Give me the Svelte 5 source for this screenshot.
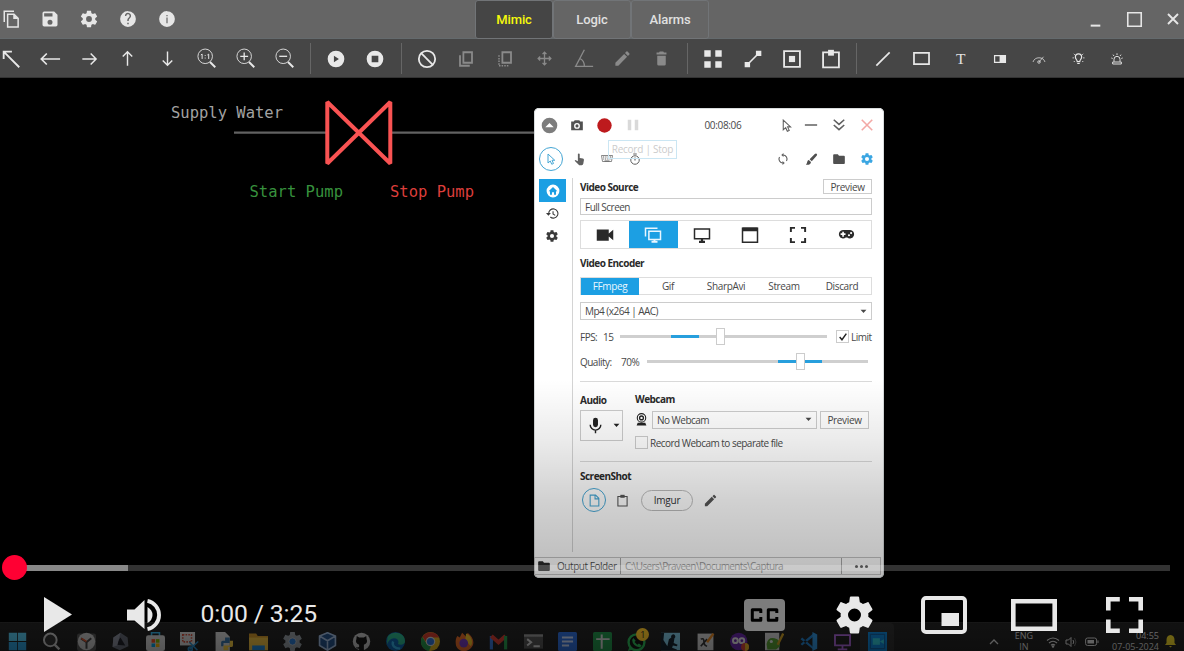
<script>
  const icons = {
    copy: '<path d="M3 16V1.500h13M7.500 5.500h8.500l5.500 5.500v11.500H7.500z" fill="none" stroke="currentColor" stroke-width="2"/><path d="M15 5v7h7z"/>',
    save: '<path d="M17 3H5a2 2 0 0 0-2 2v14a2 2 0 0 0 2 2h14a2 2 0 0 0 2-2V7zM12 19a3 3 0 1 1 0-6 3 3 0 0 1 0 6zM15 9H5V5h10z" fill-rule="evenodd"/>',
    gear: '<path d="M19.430 12.980c.04-.32.07-.64.07-.98s-.03-.66-.07-.98l2.110-1.650c.19-.15.24-.42.12-.64l-2-3.460c-.12-.22-.39-.3-.61-.22l-2.490 1c-.52-.4-1.080-.73-1.690-.98l-.38-2.650C14.460 2.180 14.250 2 14 2h-4c-.25 0-.46.18-.49.42l-.38 2.650c-.61.25-1.170.59-1.690.98l-2.490-1c-.23-.09-.49 0-.61.22l-2 3.460c-.13.22-.07.49.12.64l2.110 1.650c-.04.32-.07.65-.07.98s.03.66.07.98l-2.110 1.650c-.19.15-.24.42-.12.64l2 3.460c.12.22.39.3.61.22l2.490-1c.52.4 1.080.73 1.690.98l.38 2.650c.03.24.24.42.49.42h4c.25 0 .46-.18.49-.42l.38-2.650c.61-.25 1.170-.59 1.690-.98l2.490 1c.23.09.49 0 .61-.22l2-3.460c.12-.22.07-.49-.12-.64zM12 15.500a3.500 3.500 0 1 1 0-7 3.500 3.500 0 0 1 0 7z"/>',
    help: '<path fill-rule="evenodd" d="M12 1.500a10.500 10.500 0 1 0 0 21 10.500 10.500 0 0 0 0-21zM11 17h2v2h-2zm4.100-6.600-.9.900C13.400 12 13 12.700 13 14.500h-2c0-2 .4-3 1.400-4l1.200-1.200A2.200 2.200 0 1 0 9.800 8H7.900a4.100 4.100 0 1 1 7.200 2.400z"/>',
    info: '<path fill-rule="evenodd" d="M12 1.500a10.500 10.500 0 1 0 0 21 10.500 10.500 0 0 0 0-21zM11.200 10h1.600v7.500h-1.600zM11.200 6.500h1.600v1.800h-1.600z"/>',
    nw: '<path d="M4 12V4h9M4 4l17 17" fill="none" stroke="currentColor" stroke-width="2"/>',
    left: '<path d="M8.500 6 2.500 12l6 6M3 12h20" fill="none" stroke="currentColor" stroke-width="1.800"/>',
    right: '<path d="M14 5.500l6.500 6.500-6.500 6.500M20 12H4" fill="none" stroke="currentColor" stroke-width="1.800"/>',
    up: '<path d="M6 9.500 12 3.500l6 6M12 4v17" fill="none" stroke="currentColor" stroke-width="1.800"/>',
    down: '<path d="M6 14.500l6 6 6-6M12 20V3" fill="none" stroke="currentColor" stroke-width="1.800"/>',
    zoomFit: '<circle cx="10.500" cy="9.500" r="8.300" fill="none" stroke="currentColor" stroke-width="1"/><path d="M16 16l6 6" stroke="currentColor" stroke-width="2.200"/><path d="M5.500 8 7 7v5.500M13 8l1.500-1v5.500M10.500 8v1M10.500 11v1" fill="none" stroke="currentColor" stroke-width="1.100"/>',
    zoomIn: '<circle cx="10.500" cy="9.500" r="8.300" fill="none" stroke="currentColor" stroke-width="1"/><path d="M16 16l6 6" stroke="currentColor" stroke-width="2.200"/><path d="M6 9.500h9M10.500 5v9" stroke="currentColor" stroke-width="1.500"/>',
    zoomOut: '<circle cx="10.500" cy="9.500" r="8.300" fill="none" stroke="currentColor" stroke-width="1"/><path d="M16 16l6 6" stroke="currentColor" stroke-width="2.200"/><path d="M6 9.500h9" stroke="currentColor" stroke-width="1.500"/>',
    playc: '<path fill-rule="evenodd" d="M12 2a10 10 0 1 0 0 20 10 10 0 0 0 0-20zM9.500 8v8l6-4z"/>',
    stopc: '<path fill-rule="evenodd" d="M12 2a10 10 0 1 0 0 20 10 10 0 0 0 0-20zM8 8h8v8H8z"/>',
    ban: '<circle cx="12" cy="12" r="9.800" fill="none" stroke="currentColor" stroke-width="2.200"/><path d="M5 5l14 14" stroke="currentColor" stroke-width="2.200"/>',
    dup: '<path d="M8.500 3H20v14H8.500zM4 7v14h13" fill="none" stroke="currentColor" stroke-width="2.400"/>',
    dupDash: '<path d="M8.500 3H20v14H8.500z" fill="none" stroke="currentColor" stroke-width="2.400"/><path d="M4 7v14h13" fill="none" stroke="currentColor" stroke-width="2" stroke-dasharray="2 1.500"/>',
    move: '<path d="M12 4v16M4 12h16M9.500 6.500 12 4l2.500 2.500M9.500 17.500 12 20l2.500-2.500M6.500 9.500 4 12l2.500 2.500M17.500 9.500 20 12l-2.500 2.500" fill="none" stroke="currentColor" stroke-width="1.700"/>',
    angle: '<path d="M13 2 3 21h20M8 12c3 1.500 5 5 5 9" fill="none" stroke="currentColor" stroke-width="1.500"/>',
    pencil: '<path d="M3 17.250V21h3.750L17.810 9.940l-3.750-3.750zM20.710 7.040a1 1 0 0 0 0-1.410l-2.340-2.340a1 1 0 0 0-1.410 0l-1.830 1.830 3.750 3.750z"/>',
    trash: '<path d="M6 20a2 2 0 0 0 2 2h8a2 2 0 0 0 2-2V8H6zM19 3.500h-3.500l-1-1.500h-5l-1 1.500H5v3h14z"/>',
    grid: '<path d="M2.500 2.500h7v7h-7zM14.500 2.500h7v7h-7zM2.500 14.500h7v7h-7zM14.500 14.500h7v7h-7z"/>',
    connect: '<path d="M15.500 2H22v6.500h-6.500zM2 15.500h6.500V22H2z"/><path d="M6 18 18 6" stroke="currentColor" stroke-width="2"/>',
    boxed: '<path d="M2.500 2.500h19v19h-19z" fill="none" stroke="currentColor" stroke-width="2.200"/><path d="M8.300 8.300h7.400v7.400H8.300z"/>',
    paste: '<path d="M2.500 4h19v18h-19z" fill="none" stroke="currentColor" stroke-width="2.200"/><path d="M8.500 1h7v7h-7z"/>',
    line: '<path d="M4 20 20 4" stroke="currentColor" stroke-width="2"/>',
    rect: '<path d="M2.500 5h19v14h-19z" fill="none" stroke="currentColor" stroke-width="2.200"/>',
    toggle: '<path d="M5.500 8h13v8h-13z" fill="none" stroke="currentColor" stroke-width="1.500"/><path d="M11.500 7.500h7.500v9h-7.500z"/>',
    gauge: '<path d="M4 16a8.500 8.500 0 0 1 16 0M12 16l6-7" fill="none" stroke="currentColor" stroke-width="1.200" opacity=".8"/><circle cx="12" cy="16" r="1.700" fill="none" stroke="currentColor"/>',
    bulb: '<path d="M10 17c0-3-3-4-3-7.500a5 5 0 0 1 10 0c0 3.500-3 4.500-3 7.500zM10 20h4" fill="none" stroke="currentColor" stroke-width="1.900"/><path d="M2.500 11h2M19.500 11h2M4.500 4.500l1.500 1.500M19.500 4.500 18 6M4.500 17.500 6 16M19.500 17.500 18 16" stroke="currentColor" stroke-width="1.500"/>',
    siren: '<path d="M7.500 16v-3.500a4.500 4.500 0 0 1 9 0V16M5.500 16.500h13v3h-13zM12 3.500v2.500M6 5.500l1.500 2M18 5.500l-1.500 2M3.500 10.500l2 .7M20.500 10.500l-2 .7" fill="none" stroke="currentColor" stroke-width="1.400"/>',
    min: '<path d="M6.500 19h11" stroke="currentColor" stroke-width="2.300"/>',
    max: '<path d="M3.500 3.500h17v17h-17z" fill="none" stroke="currentColor" stroke-width="2"/>',
    close: '<path d="M6 6l12 12M18 6 6 18" stroke="currentColor" stroke-width="2.300"/>',
    upc: '<path fill-rule="evenodd" d="M12 1a11 11 0 1 0 0 22 11 11 0 0 0 0-22zM6 14.500h12l-6-6z"/>',
    camera: '<path fill-rule="evenodd" d="M8 4 6.500 6H2v15h20V6h-4.500L16 4zm4 4.500a5 5 0 1 1 0 10 5 5 0 0 1 0-10zm0 2.300a2.700 2.700 0 1 0 0 5.400 2.700 2.700 0 0 0 0-5.400z"/>',
    record: '<circle cx="12" cy="12" r="11.500"/>',
    pause: '<path d="M3 3h6v18H3zM15 3h6v18h-6z"/>',
    cursor: '<path d="M6 2v18l4.500-4 3 6.500 3.500-1.500-3-6.500h5.500z" fill="none" stroke="currentColor" stroke-width="2"/>',
    dash: '<path d="M1.500 12h21" stroke="currentColor" stroke-width="2.500"/>',
    chevs: '<path d="M3 3l9 8 9-8M3 12l9 8 9-8" fill="none" stroke="currentColor" stroke-width="2.700"/>',
    bigx: '<path d="M3 3l18 18M21 3 3 21" stroke="currentColor" stroke-width="2.700"/>',
    hand: '<path d="M9 2.500a1.700 1.700 0 0 1 3.400 0V9l6 1.300q2 .5 1.800 2.600L19 20q-.4 2.500-3 2.500h-4.500L3 14.500l1.500-1.400L9 15z"/>',
    keys: '<path d="M1 5h22l-2 12H3z" fill="none" stroke="currentColor" stroke-width="1.500"/><path d="M4 8h16M4.500 12h15" stroke="currentColor" stroke-width="2.300" stroke-dasharray="2 1.500"/><path d="M7 16h10" stroke="currentColor" stroke-width="2"/>',
    timer: '<circle cx="12" cy="14" r="8.500" fill="none" stroke="currentColor" stroke-width="2"/><path d="M8.500 2h7M12 9v6" stroke="currentColor" stroke-width="2.300"/>',
    sync: '<path d="M12 4a8 8 0 0 1 7 12M12 20A8 8 0 0 1 5 8" fill="none" stroke="currentColor" stroke-width="2.300"/><path d="M13 0v8L8.500 4zM11 24v-8l4.500 4z"/>',
    brush: '<path d="M21.500 1.500q1.800 1.500 0 3.500L12.500 15l-4-3.500 9.500-9.500q1.800-1.500 3.500-.5zM7 13l4 3.500C11 21 6 23 1.500 21 5 19.500 3 14 7 13z"/>',
    folder: '<path d="M3.500 4H10l2 2.500h8.500A1.500 1.500 0 0 1 22 8v11a1.500 1.500 0 0 1-1.500 1.500h-17A1.500 1.500 0 0 1 2 19V5.500A1.500 1.500 0 0 1 3.500 4z"/>',
    home: '<path fill-rule="evenodd" d="M12 1a11 11 0 1 0 0 22 11 11 0 0 0 0-22zM4.500 12.500 12 5l7.500 7.500h-2.300V18.500h-3.400V14h-3.600v4.500H6.800v-6z"/>',
    history: '<path d="M5 12.500A8.500 8.500 0 1 1 8 18.500M13 8v5l4 2.500" fill="none" stroke="currentColor" stroke-width="2"/><path d="M0 11h9l-4.500 5z"/>',
    video: '<path d="M1 4.500h16v5.500l6-5v14l-6-5v5.500H1z"/>',
    screens: '<path d="M6.500 7H22v11H6.500zM2 14V3h16" fill="none" stroke="currentColor" stroke-width="2"/><path d="M10 21h8M14 18v3" stroke="currentColor" stroke-width="2.500"/>',
    monitor: '<path d="M2 4h20v13H2z" fill="none" stroke="currentColor" stroke-width="2"/><path d="M8 21h8M12 17v4" stroke="currentColor" stroke-width="3"/>',
    windowed: '<path d="M2 3h20v18.500H2z" fill="none" stroke="currentColor" stroke-width="2"/><path d="M2 2h20v5H2z"/>',
    corners: '<path d="M2.500 8V2.500H8M16 2.500h5.500V8M21.500 16v5.500H16M8 21.500H2.500V16" fill="none" stroke="currentColor" stroke-width="2.600"/>',
    pad: '<path fill-rule="evenodd" d="M7 5.500h10a6 6 0 1 1-4 10.700h-2A6 6 0 1 1 7 5.500zM6 8v2.300H3.700v2.400H6V15h2.300v-2.300h2.300v-2.400H8.300V8zm9.500 3.500a1.500 1.500 0 1 0 0 3 1.500 1.500 0 0 0 0-3zm3-3a1.500 1.500 0 1 0 0 3 1.500 1.500 0 0 0 0-3z"/>',
    mic: '<path d="M12 14.500a3.500 3.500 0 0 0 3.500-3.500V4.500a3.500 3.500 0 0 0-7 0V11a3.500 3.500 0 0 0 3.500 3.500z"/><path d="M4.500 11a7.500 7.500 0 0 0 15 0M12 18v5" fill="none" stroke="currentColor" stroke-width="2"/>',
    webcam: '<circle cx="12" cy="9" r="7.800" fill="none" stroke="currentColor" stroke-width="2"/><circle cx="12" cy="9" r="3.500" fill="none" stroke="currentColor" stroke-width="2.500"/><path d="M5 18h14l2 5H3z"/>',
    doc: '<path d="M4 2h10l6 6v14H4zM13 2v7h7" fill="none" stroke="currentColor" stroke-width="2"/>',
    clip: '<path d="M3.500 4.500h17V22h-17z" fill="none" stroke="currentColor" stroke-width="2"/><path d="M8 1.500h8V7H8z"/>',
    tick: '<path d="M4 12l5.500 6.500L20 4" fill="none" stroke="currentColor" stroke-width="3.500"/>',
    caret: '<path d="M2 6h20l-10 11z"/>'
  };

  const fileTools = ['copy', 'save', 'gear', 'help', 'info'];
  const tabs = ['Mimic', 'Logic', 'Alarms'];
  const toolGroups = [
    [['nw', 22], ['left', 22], ['right', 20], ['up', 19], ['down', 19], ['zoomFit', 21], ['zoomIn', 21], ['zoomOut', 21]],
    [['playc', 20], ['stopc', 20]],
    [['ban', 20], ['dup', 18, 1], ['dupDash', 18, 1], ['move', 19, 1], ['angle', 21, 1], ['pencil', 19, 1], ['trash', 17, 1]],
    [['grid', 22], ['connect', 20], ['boxed', 20], ['paste', 20]],
    [['line', 20], ['rect', 19], ['text', 0], ['toggle', 20], ['gauge', 18], ['bulb', 15], ['siren', 16]]
  ];
  const sources = [['video', 18], ['screens', 18], ['monitor', 18], ['windowed', 18], ['corners', 18], ['pad', 17]];
  const encoders = ['FFmpeg', 'Gif', 'SharpAvi', 'Stream', 'Discard'];

  const apps = [
    '<path fill="#57cdf5" d="M1 1h10.500v10.500H1zM12.500 1H23v10.500H12.500z"/><path fill="#2ea6e6" d="M1 12.500h10.500V23H1zM12.500 12.500H23V23H12.500z"/>',
    '<circle cx="10.500" cy="10" r="8" fill="#333" stroke="#ccc" stroke-width="2.500"/><path d="M16 16l6 6" stroke="#ccc" stroke-width="3"/>',
    '<rect x="0" y="2" width="24" height="22" rx="3" fill="#555"/><circle cx="12" cy="12" r="11" fill="#ccc"/><path d="M12 21v-8L5 8M12 13l6-5" fill="none" stroke="#444" stroke-width="2.500"/><path d="M12 12 5.500 8" stroke="#e0542c" stroke-width="2"/>',
    '<path d="M12 1l9 6 1 11-11 5-9-4L3 7z" fill="#666b78"/><path d="M12 7l6 10-12-1z" fill="#1c1e26"/><path d="M12 1 3 7l-1 12 6-2z" fill="#8f94a2"/>',
    '<path d="M7 5V1h10v4" fill="none" stroke="#36b8ee" stroke-width="2"/><rect y="4" width="24" height="20" rx="3" fill="#ddd"/><path fill="#f04d23" d="M7 9h4.500v4.500H7z"/><path fill="#80b900" d="M12.500 9H17v4.500h-4.500z"/><path fill="#00a2e8" d="M7 14.500h4.500V19H7z"/><path fill="#ffb900" d="M12.500 14.500H17V19h-4.500z"/>',
    '<path fill="#ddd" d="M0 0h19v17H0z"/><path d="M3.500 3.500h11v9h-11z" fill="none" stroke="#d14c37" stroke-width="2" stroke-dasharray="2 1.500"/><path d="M12 22 23 12M12 13l10 10" stroke="#278fd0" stroke-width="2"/><circle cx="13" cy="21.500" r="2.500" fill="none" stroke="#278fd0" stroke-width="2"/>',
    '<path fill="#ddd" d="M2 0h12l6 6v18H2z"/><path d="M14 7h6v7h-8v4H9v-5q0-2 2-2h3z" fill="#3978ad"/><path d="M12 23v-6h8v-6h4v6q0 2-2 2h-4v4z" fill="#ffd343"/>',
    '<path fill="#d79a28" d="M0 2h9l2 3h13v18H0z"/><path fill="#f5c543" d="M0 7h24v16H0z"/><path fill="#218be0" d="M4 17h16v6H4z"/>',
    '<g color="#9aa2a9" fill="currentColor" transform="translate(-2.400 -2.400) scale(1.200)">GEAR</g><circle cx="12" cy="12" r="4.500" fill="#287bd5" stroke="#ccc"/>',
    '<path fill="#23538e" d="M12 0l11 5v12l-11 7L1 17V5z"/><path d="M2 5l10 6 10-6M12 11v12M2 5l10-4 10 4v12l-10 6-10-6z" fill="none" stroke="#a9c4e8" stroke-width="2"/>',
    '<circle cx="12" cy="12" r="11" fill="#ccc"/><path d="M6 5l3 2h6l3-2 .5 4q2 5-3.500 7v8H9v-3q-3 1-4-2 2 1 4 0v-3Q3.500 14 5.500 9z" fill="#111"/>',
    '<circle cx="12" cy="12" r="12" fill="#0d65b1"/><path d="M2 6C7-2 24-1 24 12c0 4-6 5-9 3 2-3 0-7-5-7-4 0-7 3-9 8z" fill="#2bbd91"/><path d="M9 12c-2 5 2 9 9 9" fill="none" stroke="#32b5ef" stroke-width="3"/>',
    '<circle cx="12" cy="12" r="12" fill="#e7b91f"/><path d="M2 6a12 12 0 0 1 21 1H12l-4 8z" fill="#da3c2b"/><path d="M1.500 6 8 16l5 1-3 7A12 12 0 0 1 1.500 6z" fill="#249c4c"/><circle cx="12" cy="12" r="6" fill="#ddd"/><circle cx="12" cy="12" r="4.500" fill="#2a75df"/>',
    '<path d="M3 5l3 2 3-6 5 5 2-5c5 4 8 9 7 14-3 12-21 12-22 0-.5-4 0-7 2-10z" fill="#f36f27"/><path d="M14 2c8 4 9 12 6 16l-7-8z" fill="#fccb29"/><circle cx="11" cy="14" r="5.500" fill="#793bc6"/>',
    '<path d="M3 22V5" stroke="#397be3" stroke-width="4"/><path d="M3 5l9 8 9-8" fill="none" stroke="#de3d31" stroke-width="5"/><path d="M21 5v17" stroke="#28a451" stroke-width="4"/>',
    '<path fill="#555" d="M0 3h24v18H0z"/><path fill="#999" d="M0 3h24v3H0z"/><path d="M4 9l5 4-5 4M12 18h8" stroke="#ddd" fill="none" stroke-width="2.500"/>',
    '<rect width="24" height="24" rx="2" fill="#2e72e5"/><path d="M5 7h14M5 12h14M5 17h9" stroke="#cfe0ff" stroke-width="2.500"/>',
    '<rect width="24" height="24" rx="2" fill="#219b4c"/><path d="M4 9h17M11 3v18" stroke="#ddd" stroke-width="2.500"/>',
    '<circle cx="12" cy="13" r="10" fill="#111" stroke="#2dc45c" stroke-width="3"/><path d="M1 24l3-7 4 5z" fill="#2dc45c"/><path d="M8 7.500 6.500 10q.5 8 10 9.500l2-2.500-3.500-2.500-2 1.500-3.500-3.500L11 11z" fill="#2dc45c"/>',
    '<path fill="#85d1ee" d="M0 1h24v22H0z"/><path fill="#13212c" d="M0 1h4l-1 9 5 8 2-9 3-2a2.700 2.700 0 1 1 4 1l-1 6 5 2-1 2-5-1-1 3 6 2v1H0z"/>',
    '<path fill="#ddd" d="M2 2h20v21H2z"/><path d="M6 9q4-2 4 3t4 6M14 9l-8 9" stroke="#333" stroke-width="2" fill="none"/><path d="M14 13 22 2" stroke="#ee8b21" stroke-width="3"/>',
    '<circle cx="11" cy="12" r="11" fill="#6c27b1"/><circle cx="6.800" cy="11" r="3" fill="none" stroke="#eee" stroke-width="2.500"/><circle cx="15" cy="11" r="3" fill="none" stroke="#eee" stroke-width="2.500"/><circle cx="19" cy="19" r="5" fill="#e44a39"/><path d="M19 14a5 5 0 0 1 0 10z" fill="#f5bd28"/>',
    '<path fill="#ddd" d="M0 1h18v22H0z"/><path fill="#5aa532" d="M2 15q2-9 10-7 8 2 7 10l-5 4H3z"/><path d="M16 16 23 2" stroke="#d9a624" stroke-width="3"/><circle cx="8" cy="12" r="2" fill="#eee"/>',
    '<path d="M18 2 2 15l2 2L18 6zM18 22 2 9l2-2 14 12z" fill="#2186d6"/><path d="M17 0l6 3v18l-6 3z" fill="#319be8"/>',
    '<path d="M2.500 4h19v13h-19z" fill="none" stroke="#b56ae6" stroke-width="2.300"/><path d="M6 22h12M12 17v5" stroke="#b56ae6" stroke-width="2.300"/>',
    '<path fill="#0a8ae0" d="M0 0h24v24H0z"/><path d="M3 3h18v18H3z" fill="none" stroke="#0d62a6" stroke-width="1.500"/><path d="M6 8h9v8H6zM15 12l5-3v6z" fill="#2fd0df"/>'
  ].map((a) => a.replace('GEAR', icons.gear));
</script>

{#snippet icon(name, size)}
  <svg class="ico" viewBox="0 0 24 24" width={size} height={size} fill="currentColor">{@html icons[name]}</svg>
{/snippet}

<main class="screen">
  <header class="titlebar">
    <div class="cells">
      {#each fileTools as t}<span class="cell">{@render icon(t, t === 'gear' || t === 'save' ? 20 : 18)}</span>{/each}
    </div>
    <nav class="tabs">
      {#each tabs as t, i}<button class:active={i === 0}>{t}</button>{/each}
    </nav>
    <div class="cells end">
      <span class="cell">{@render icon('min', 21)}</span>
      <span class="cell">{@render icon('max', 19)}</span>
      <span class="cell">{@render icon('close', 20)}</span>
    </div>
  </header>

  <div class="toolbar">
    {#each toolGroups as group, g}
      {#if g}<i class="sep"></i>{/if}
      {#each group as [name, size, off]}
        <span class="tool" class:off>
          {#if name === 'text'}<b class="tee">T</b>{:else}{@render icon(name, size)}{/if}
        </span>
      {/each}
    {/each}
  </div>

  <section class="canvas">
    <svg class="mimic" width="534" height="150" viewBox="0 78 534 150">
      <path d="M234 132.700h300" stroke="#626262" stroke-width="2.300" />
      <path d="M327.300 102v61.500L390.300 102v61.500z" fill="#000" stroke="#f95353" stroke-width="4" stroke-linejoin="bevel" />
      <text x="171" y="118" textLength="112" fill="#a2a2a2">Supply Water</text>
      <text x="249.500" y="196.500" textLength="93.500" fill="#37913d">Start Pump</text>
      <text x="390" y="196.500" textLength="84" fill="#dc3e3b">Stop Pump</text>
    </svg>
  </section>

  <section class="win">
    <div class="row r1">
      <span class="c28 grey first">{@render icon('upc', 17)}</span>
      <span class="c28 dk">{@render icon('camera', 14)}</span>
      <span class="c28 rec">{@render icon('record', 15)}</span>
      <span class="c28 pale">{@render icon('pause', 14)}</span>
      <span class="clock">00:08:06</span>
      <span class="c28 narrow">{@render icon('cursor', 13)}</span>
      <span class="c28">{@render icon('dash', 14)}</span>
      <span class="c28">{@render icon('chevs', 14)}</span>
      <span class="c28 red">{@render icon('bigx', 14)}</span>
    </div>
    <div class="row r2">
      <span class="ring">{@render icon('cursor', 12)}</span>
      <span class="c28">{@render icon('hand', 13)}</span>
      <span class="c28">{@render icon('keys', 12)}</span>
      <span class="c28">{@render icon('timer', 12)}</span>
      <span class="fill"></span>
      <span class="c28">{@render icon('sync', 12)}</span>
      <span class="c28 dk">{@render icon('brush', 13)}</span>
      <span class="c28 dk">{@render icon('folder', 14)}</span>
      <span class="c28 blue">{@render icon('gear', 14)}</span>
      <span class="tip">Record | Stop</span>
    </div>

    <div class="body">
      <aside>
        <span class="home">{@render icon('home', 14)}</span>
        <span>{@render icon('history', 13)}</span>
        <span>{@render icon('gear', 14)}</span>
      </aside>
      <div class="form">
        <div class="row head"><b>Video Source</b><button>Preview</button></div>
        <div class="field full">Full Screen</div>
        <div class="sources">
          {#each sources as [name, size], i}<span class:on={i === 1}>{@render icon(name, size)}</span>{/each}
        </div>
        <b class="row enc">Video Encoder</b>
        <div class="encoders">
          {#each encoders as e, i}<span class:on={i === 0}>{e}</span>{/each}
        </div>
        <div class="field combo">Mp4 (x264 | AAC){@render icon('caret', 7)}</div>
        <div class="row slide fps">
          <span class="lab">FPS:</span><span class="val">15</span>
          <span class="track"><i style="margin-left:24.500%;width:13.500%"></i><em style="left:47.900%"></em></span>
          <span class="check">{@render icon('tick', 10)}</span><span class="limit">Limit</span>
        </div>
        <div class="row slide quality">
          <span class="lab">Quality:</span><span class="val">70%</span>
          <span class="track"><i style="margin-left:59.300%;width:20%"></i><em style="left:69%"></em></span>
        </div>
        <hr />
        <div class="av">
          <div class="audio">
            <b>Audio</b>
            <div class="mic">{@render icon('mic', 17)}{@render icon('caret', 7)}</div>
          </div>
          <div class="webcam">
            <b>Webcam</b>
            <div class="row camrow">
              <span class="camico">{@render icon('webcam', 13)}</span>
              <div class="field combo">No Webcam{@render icon('caret', 7)}</div>
              <button>Preview</button>
            </div>
            <div class="row sepfile"><span class="check"></span>Record Webcam to separate file</div>
          </div>
        </div>
        <hr />
        <b class="row shot">ScreenShot</b>
        <div class="row shots">
          <span class="ring">{@render icon('doc', 13)}</span>
          <span class="clipb">{@render icon('clip', 13)}</span>
          <span class="pill">Imgur</span>
          <span class="pen">{@render icon('pencil', 15)}</span>
        </div>
      </div>
    </div>
    <footer>
      <span class="fold">{@render icon('folder', 14)}</span>
      <span class="out">Output Folder</span>
      <span class="path">C:\Users\Praveen\Documents\Captura</span>
      <span class="dots"><i></i><i></i><i></i></span>
    </footer>
  </section>

  <div class="taskbar">
    <div class="apps">
      {#each apps as a, i}
        <span class="app" class:current={i === 25}>
          <svg viewBox="0 0 24 24" width="19" height="19">{@html a}</svg>
          {#if i === 18}<small>1</small>{/if}
        </span>
      {/each}
    </div>
    <div class="tray">
      <svg width="10" height="6" viewBox="0 0 10 6"><path d="M1 5l4-4 4 4" fill="none" stroke="#c5c5c5" stroke-width="1.300" /></svg>
      <span class="lang">ENG<br />IN</span>
      <svg class="wifi" width="14" height="12" viewBox="0 0 14 12" fill="none" stroke="#ccc" stroke-width="1.200"><path d="M1 4.500q6-5 12 0M3 7q4-3.500 8 0M5 9.200q2-1.800 4 0" /><circle cx="7" cy="10.500" r=".7" /></svg>
      <svg class="vol" width="12" height="12" viewBox="0 0 12 12" fill="none" stroke="#ccc"><path d="M1 4h2.500L6 1.500v9L3.500 8H1zM8 4q1.500 2 0 4" /><path d="M9.500 2q3 4 0 8" stroke="#666" /></svg>
      <svg class="bat" width="14" height="10" viewBox="0 0 14 10"><rect x=".6" y="1" width="11" height="7.500" rx="2" fill="none" stroke="#ccc" /><path d="M2.500 3h6.500v3.600H2.500zM12.500 3.500h1v2.500h-1z" fill="#ccc" /></svg>
      <span class="date">04:55<br />07-05-2024</span>
      <svg class="bell" width="11" height="13" viewBox="0 0 11 13"><path d="M5.500 0q4 .5 4 5v3l1.500 2H0l1.500-2V5q0-4.500 4-5zM4 11h3l-1.500 1.500z" fill="#e0c828" /></svg>
    </div>
  </div>

  <div class="player">
    <div class="progress"><i class="loaded"></i><i class="knob"></i></div>
    <div class="controls">
      <svg class="play" width="28" height="35" viewBox="0 0 28 35"><path d="M0 0l28 17.500L0 35z" /></svg>
      <svg class="sound" width="35" height="34" viewBox="0 0 35 34"><path d="M0 11.500h7.500L17.500 2v29L7.500 22.500H0zM20.500 9q5 3 5 8t-5 8z" /><path d="M20.500 2.800a14.500 14.500 0 0 1 0 28.400" fill="none" stroke="#e8e8e8" stroke-width="3.800" /></svg>
      <span class="time">0:00 / 3:25</span>
      <div class="right">
        <span class="cc"><svg width="41" height="32" viewBox="0 0 41 32"><rect width="41" height="32" rx="4" fill="#7c7c7c" /><path d="M16.800 14v-3.200H8.300v10.400h8.500V18M32.800 14v-3.200h-8.500v10.400h8.500V18" fill="none" stroke="#000" stroke-width="3" stroke-linejoin="round" /></svg></span>
        <svg width="37" height="38" viewBox="2 2 20 20"><g>{@html icons.gear}</g></svg>
        <svg width="46" height="38" viewBox="0 0 46 38"><rect x="2" y="2" width="42" height="34" rx="3" fill="none" stroke="#e8e8e8" stroke-width="4" /><path d="M20.500 17H38v13H20.500z" /></svg>
        <svg width="46" height="32" viewBox="0 0 46 32"><path d="M2.300 2.300h41.400v27.400H2.300z" fill="none" stroke="#e8e8e8" stroke-width="4.600" /></svg>
        <svg width="37" height="36" viewBox="0 0 37 36"><path d="M2.300 13.500V2.300h11.500M23 2.300h11.700v11.200M34.700 22.500v11.200H23M13.800 33.700H2.300V22.500" fill="none" stroke="#e8e8e8" stroke-width="4.600" /></svg>
      </div>
    </div>
  </div>
</main>

<style>
  :global(body) { margin: 0; background: #000; }
  .screen { position: relative; width: 1184px; height: 651px; overflow: hidden; background: #000; font-family: Roboto, sans-serif; }
  * { box-sizing: border-box; }
  .ico { display: block; flex: none; }
  button { background: none; border: 0; padding: 0; font: inherit; color: inherit; }

  .titlebar { height: 39px; display: grid; grid-template-columns: 1fr auto 1fr; background: #656565; border-bottom: 1px solid #646a6d; color: #e6e6e6; }
  .cells { display: flex; margin-left: -9px; }
  .cells.end { justify-content: flex-end; margin: 0 -8.5px 0 0; }
  .cell { width: 39px; height: 38px; display: grid; place-items: center; }
  .tabs { display: flex; }
  .tabs button { width: 78px; height: 39px; border: 1px solid #717477; border-radius: 3px; font-size: 13px; font-weight: 500; letter-spacing: -0.1px; color: #e0e0e0; }
  .tabs .active { background: #454545; color: #f5f90c; }
  .toolbar { height: 39px; display: flex; align-items: center; padding-top: 1px; background: #464646; color: #e8e8e8; border-bottom: 1px solid #333; }
  .toolbar > :first-child { margin-left: -9px; }
  .tool { flex: none; width: 39.13px; display: grid; place-items: center; }
  .off { color: #8a8a8a; }
  .sep { flex: none; width: 12.6px; height: 31px; background: linear-gradient(#666, #666) center / 1px 100% no-repeat; }
  .tee { font: 15.5px "Liberation Serif", serif; color: #e2e2e2; }
  .canvas { height: 573px; }
  .mimic { display: block; font: 15.5px "DejaVu Sans Mono", monospace; }

  .win { position: absolute; left: 534px; top: 108px; width: 350px; height: 470px; display: flex; flex-direction: column; background: #fff; border-radius: 5px; box-shadow: inset 0 0 0 1px #d8dcdd; overflow: hidden; font: 10px "Open Sans", sans-serif; letter-spacing: -0.52px; color: #484848; white-space: nowrap; }
  .row { display: flex; align-items: center; }
  .win b { color: #2a2a2a; font-weight: 700; letter-spacing: -0.52px; }
  .c28 { width: 28px; display: grid; place-items: center; color: #606060; }
  .c28.narrow { width: 21px; }
  .c28.first { width: 27px; }
  .r1 { height: 34px; padding: 0 3.5px 0 1.5px; }
  .clock { flex: 1; padding-left: 58px; letter-spacing: -0.35px; }
  .c28.grey { color: #7d7d7d; }
  .c28.dk { color: #505050; }
  .c28.rec { color: #bd1a1d; }
  .c28.pale { color: #d9d9d9; }
  .c28.red { color: #f3a8a5; }
  .c28.blue { color: #3ba6e2; }
  .r2 { position: relative; height: 34px; padding: 0 3px 0 5px; }
  .ring { width: 24px; height: 24px; border: 1.5px solid #45a6d4; border-radius: 50%; display: grid; place-items: center; color: #45a6d4; }
  .r2 .ring { margin-right: 2px; }
  .fill { flex: 1; }
  .tip { position: absolute; left: 74px; top: -2px; width: 69px; height: 19px; line-height: 17px; text-align: center; border: 1px solid #cbe6f3; color: #ccc; font-size: 10px; letter-spacing: -0.25px; }
  .body { flex: 1; display: flex; padding-top: 2px; }
  aside { width: 39px; height: 374px; padding: 1px 7px 0 5px; border-right: 1.5px solid #d4d4d4; color: #3a3a3a; }
  aside span { height: 22.5px; display: grid; place-items: center; }
  aside .home { width: 27px; height: 23px; background: #1c9fe3; color: #fff; }
  .form { width: 292px; margin-left: 7px; }
  .head { height: 16px; padding-top: 1px; justify-content: space-between; }
  .win button { width: 49px; height: 15px; border: 1px solid #ccc; line-height: 12px; text-align: center; letter-spacing: -0.35px; }
  .field { padding: 0 4px; height: 18px; border: 1px solid #ccc; line-height: 16px; }
  .full { height: 17px; margin-top: 4px; line-height: 17px; }
  .sources { display: grid; grid-template-columns: repeat(6, 1fr); height: 29px; margin-top: 5px; border: 1px solid #ddd; color: #2a2a2a; }
  .sources span { display: grid; place-items: center; }
  .on { background: #1c9fe3; }
  .sources .on, .encoders .on { color: #e8f6ff; }
  .enc { height: 28px; }
  .encoders { display: grid; grid-template-columns: repeat(5, 1fr); height: 18px; border: 1px solid #ddd; text-align: center; line-height: 17px; letter-spacing: -0.35px; }
  .combo { display: flex; align-items: center; justify-content: space-between; margin-top: 7px; }
  .slide { height: 25px; }
  .fps { margin-top: 4px; }
  .fps .lab { width: 23px; }
  .fps .val { width: 17px; }
  .limit { width: 21px; }
  .quality .lab { width: 41px; }
  .quality .val { width: 26px; }
  .quality .track { margin-right: 4px; }
  .track { position: relative; flex: 1; height: 3px; background: #cfcfcf; }
  .fps .track { margin-right: 9px; }
  .track i { display: block; height: 100%; background: #279fdd; }
  .track em { position: absolute; top: -7px; width: 9px; height: 17px; margin-left: -3px; background: #fff; border: 1px solid #ccc; }
  .check { width: 13px; height: 13px; margin-right: 2px; border: 1px solid #ccc; display: grid; place-items: center; color: #222; }
  hr { height: 1.5px; margin: 6.5px 0 0; border: 0; background: #d9d9d9; }
  .av { display: flex; height: 78.5px; }
  .audio { width: 55px; padding-top: 11px; }
  .audio b, .webcam b { display: block; height: 14px; line-height: 14px; }
  .mic { width: 43px; height: 31px; margin-top: 2.5px; padding: 0 2px 0 6px; display: flex; align-items: center; justify-content: space-between; border: 1px solid #ccc; color: #222; }
  .webcam { padding-top: 10px; }
  .camrow { margin-top: 4.5px; }
  .camico { width: 17px; color: #222; }
  .camrow .combo { width: 165px; margin: 0 3px 0 0; }
  .win .camrow button { height: 18px; line-height: 16px; }
  .sepfile { margin-top: 7.5px; height: 13px; }
  .av + hr { margin: 0; }
  .shot { height: 28px; }
  .shots { height: 24px; margin-top: -2px; padding-left: 2px; color: #555; }
  .clipb { margin: 0 12px 0 10px; }
  .pill { width: 52px; height: 21px; line-height: 18px; border: 1px solid #bbb; border-radius: 11px; text-align: center; color: #333; letter-spacing: -0.2px; }
  .pen { margin-left: 10px; }
  footer { height: 18px; margin: 0 3px 3px 0; display: flex; align-items: center; border: 1px solid #c6c6c6; }
  .fold { width: 22px; padding-left: 2px; color: #2a2a2a; }
  .out { width: 64px; height: 100%; line-height: 16px; border-right: 1px solid #aaa; letter-spacing: -0.45px; }
  .path { flex: 1; height: 100%; line-height: 16px; padding-left: 4px; border-right: 1px solid #aaa; color: #999; letter-spacing: -0.62px; }
  .dots { width: 38px; display: flex; justify-content: center; gap: 2px; }
  .dots i { width: 3px; height: 3px; border-radius: 50%; background: #333; }

  .taskbar { position: absolute; left: 0; right: 0; bottom: 0; height: 29px; display: flex; justify-content: space-between; background: #202020; border-top: 1px solid #292929; color: #ccc; font: 9px "Open Sans", sans-serif; overflow: hidden; }
  .apps { display: flex; padding-left: 0.3px; }
  .app { position: relative; width: 34.4px; height: 37px; display: grid; place-items: center; }
  .app svg { display: block; opacity: 0.85; }
  .current { background: #2b2b2b; border-radius: 4px; }
  .app small { position: absolute; left: 17px; top: 5px; width: 13px; height: 13px; line-height: 13px; border-radius: 50%; background: #f0bd28; color: #222; text-align: center; font-size: 9px; }
  .tray { display: flex; align-items: center; height: 37px; padding-right: 8px; }
  .lang { width: 24px; margin: 0 10px 2px 13px; text-align: center; line-height: 11px; }
  .date { width: 60px; margin: 0 1px 2px 0; text-align: right; line-height: 11px; letter-spacing: 0; }
  .vol { margin-left: 5px; }
  .bat { margin-left: 8px; }
  .bell { margin-left: 5px; }

  .player { position: absolute; inset: 380px 0 0 0; background: linear-gradient(transparent 0, rgba(0, 0, 0, 0.08) 60px, rgba(0, 0, 0, 0.18) 120px, rgba(0, 0, 0, 0.27) 198px, rgba(0, 0, 0, 0.45) 240px, rgba(0, 0, 0, 0.56) 271px); padding: 185px 14px 0; }
  .progress { position: relative; height: 5.5px; background: rgba(255, 255, 255, 0.2); }
  .loaded { display: block; width: 114px; height: 100%; background: rgba(255, 255, 255, 0.42); }
  .knob { position: absolute; left: -12px; top: -10.5px; width: 25px; height: 25px; border-radius: 50%; background: #f03; }
  .controls { display: flex; align-items: center; height: 88px; color: #e8e8e8; fill: #e8e8e8; padding: 0 1px 0 30px; }
  .sound { margin-left: 55px; }
  .time { margin: 0 0 2px 38.5px; font-size: 24.7px; line-height: 30px; letter-spacing: -0.1px; }
  .right { margin-left: auto; display: grid; grid-template-columns: repeat(5, 90px); place-items: center; }
  .cc svg { display: block; }
</style>
